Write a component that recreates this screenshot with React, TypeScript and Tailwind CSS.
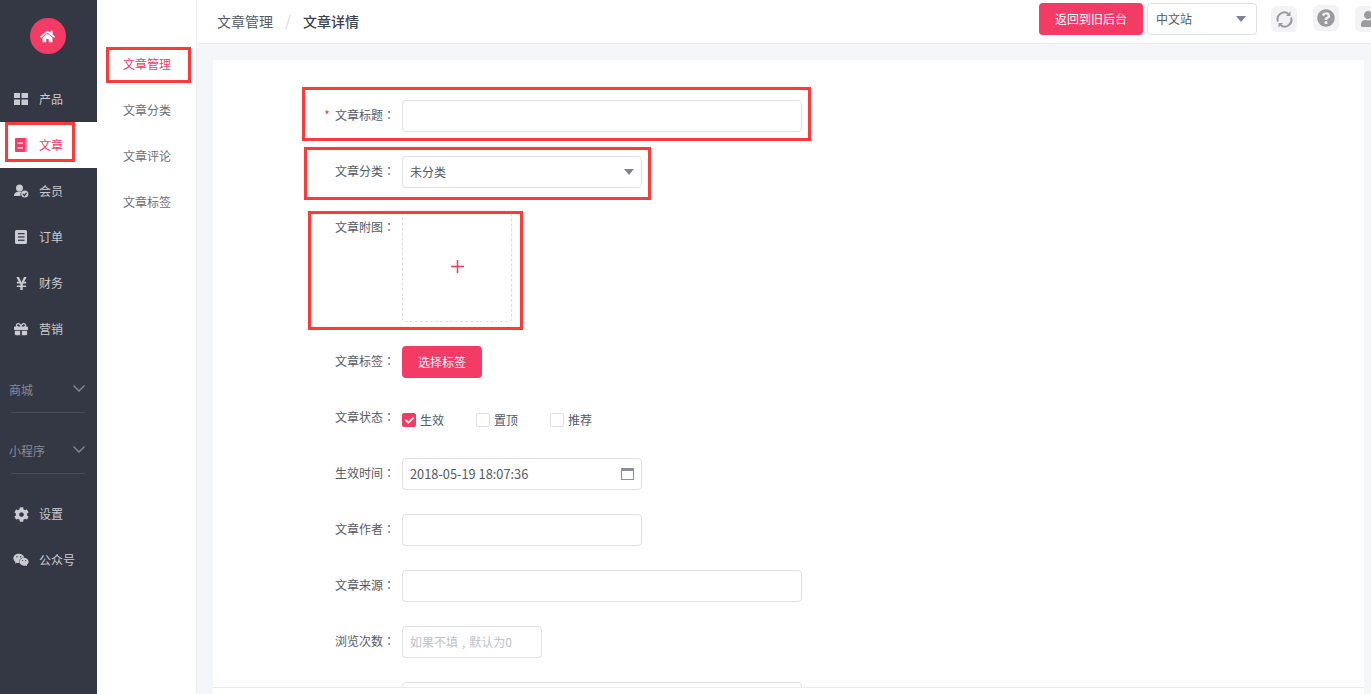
import { FaCheck, FaCog, FaGift, FaHome, FaQuestionCircle, FaUser, FaWeixin, FaYenSign } from "react-icons/fa";

const font = "font-['Microsoft_YaHei','Noto_Sans_CJK_SC',sans-serif]";

function GridIcon() {
  return (
    <svg width="14" height="12" viewBox="0 0 14 12" fill="currentColor">
      <rect x="0" y="0" width="6" height="5" />
      <rect x="7.5" y="0" width="6.5" height="5" />
      <rect x="0" y="6.5" width="6" height="5.5" />
      <rect x="7.5" y="6.5" width="6.5" height="5.5" />
    </svg>
  );
}

function DocIcon() {
  return (
    <svg width="12" height="14" viewBox="0 0 12 14" fill="currentColor">
      <path d="M1 0h10a1 1 0 0 1 1 1v12a1 1 0 0 1-1 1H1a1 1 0 0 1-1-1V1a1 1 0 0 1 1-1z" />
      <rect x="10" y="0" width="2" height="14" fill="#f98aa6" />
      <rect x="2.500" y="4.500" width="5.500" height="1.200" fill="#fff" />
      <rect x="2.500" y="9.300" width="5.500" height="1.200" fill="#fff" />
    </svg>
  );
}

function MemberIcon() {
  return (
    <svg width="15" height="14" viewBox="0 0 15 14" fill="currentColor">
      <circle cx="5.5" cy="4" r="3.5" />
      <path d="M0 12c0-3 2-4.5 5.5-4.5 1 0 1.600.1 2.200.3A4 4 0 0 0 6.500 12z" />
      <circle cx="10.800" cy="10" r="3.600" />
      <path d="M9 10l1.400 1.500 2.200-2.700" fill="none" stroke="#343844" strokeWidth="1.200" />
    </svg>
  );
}

function OrderIcon() {
  return (
    <svg width="12" height="14" viewBox="0 0 12 14" fill="currentColor">
      <path d="M1.500 0h9A1.500 1.500 0 0 1 12 1.500v11a1.500 1.500 0 0 1-1.500 1.500h-9A1.500 1.500 0 0 1 0 12.500v-11A1.500 1.500 0 0 1 1.500 0z" />
      <rect x="3" y="3" width="6.500" height="1.300" fill="#343844" />
      <rect x="3" y="6.300" width="6.500" height="1.300" fill="#343844" />
      <rect x="3" y="9.600" width="6.500" height="1.300" fill="#343844" />
    </svg>
  );
}

function CalendarIcon() {
  return (
    <svg width="13" height="12" viewBox="0 0 13 12" fill="none" stroke="#8b8ea3">
      <rect x="0.500" y="0.500" width="12" height="11" />
      <rect x="0.500" y="0.500" width="12" height="2" fill="#8b8ea3" />
    </svg>
  );
}

function RefreshIcon() {
  return (
    <svg width="17" height="17" viewBox="0 0 17 17" fill="none" stroke="currentColor" strokeWidth="2">
      <path d="M2 10.500A6.700 6.700 0 0 1 12.500 3" />
      <path d="M15 6.500A6.700 6.700 0 0 1 4.500 14" />
      <path d="M14.500 0.500v4.500h-4.500z" fill="currentColor" stroke="none" />
      <path d="M2.500 16.500v-4.500h4.500z" fill="currentColor" stroke="none" />
    </svg>
  );
}

function Chevron() {
  return (
    <svg width="12" height="7" viewBox="0 0 12 7" fill="none" stroke="currentColor" strokeWidth="1.300">
      <path d="M0.500 0.500L6 6l5.500-5.500" />
    </svg>
  );
}

function Caret() {
  return <span className="h-0 w-0 border-x-[5px] border-t-[6px] border-x-transparent border-t-[#7f8296]" />;
}

const topMenu = [
  { label: "产品", icon: <GridIcon /> },
  { label: "文章", icon: <DocIcon />, active: true },
  { label: "会员", icon: <MemberIcon /> },
  { label: "订单", icon: <OrderIcon /> },
  { label: "财务", icon: <FaYenSign size={15} /> },
  { label: "营销", icon: <FaGift size={14} /> },
];

const subMenu = ["文章管理", "文章分类", "文章评论", "文章标签"];

function MenuRow({ label, icon, active }: { label: string; icon: React.ReactNode; active?: boolean }) {
  return (
    <div className={`flex h-[46px] items-center ${active ? "bg-white text-[#f43b66]" : "text-[#c9cbd1]"}`}>
      <span className="flex w-[39px] shrink-0 justify-center pl-[3px]">{icon}</span>
      <span className="text-xs">{label}</span>
    </div>
  );
}

function Group({ label }: { label: string }) {
  return (
    <div className="ml-[11px] mr-[12px] flex h-[47px] items-center justify-between border-b border-[#494d5a] pt-[1px] text-xs text-[#868a96]">
      <span className="-ml-[2px]">{label}</span>
      <span className="-mt-[2px]">
        <Chevron />
      </span>
    </div>
  );
}

function Field({ label, required, children, className }: { label?: string; required?: boolean; children: React.ReactNode; className: string }) {
  return (
    <div className={`flex ${className}`}>
      <label className="flex h-8 w-[189px] shrink-0 items-center justify-end pb-[2px] pr-[7px] text-xs text-[#555a66]">
        {required && <span className="mr-[5px] text-[#e8452c]">*</span>}
        {label}
        {label && <span className="font-['Noto_Sans_CJK_TC',sans-serif]">：</span>}
      </label>
      {children}
    </div>
  );
}

function TextBox({ width, children }: { width: string; children?: React.ReactNode }) {
  return (
    <div className={`flex h-8 items-center justify-between rounded-[4px] border border-[#dfe0e4] bg-white px-[7px] text-xs text-[#555a66] ${width}`}>
      {children}
    </div>
  );
}

function Check({ label, on }: { label: string; on?: boolean }) {
  return (
    <div className="flex w-[74px] items-center gap-[4px] text-xs text-[#555a66]">
      <span className={`flex h-[14px] w-[14px] items-center justify-center rounded-[2px] border ${on ? "border-[#f43b66] bg-[#f43b66]" : "border-[#dfe0e4] bg-white"}`}>
        {on && <FaCheck size={9} className="text-white" />}
      </span>
      {label}
    </div>
  );
}

export default function App() {
  return (
    <div className={`relative flex h-[694px] w-[1371px] overflow-hidden bg-[#f5f6fa] ${font}`}>
      {/* Sidebar */}
      <aside className="flex w-[97px] shrink-0 flex-col bg-[#343844]">
        <div className="flex h-[76px] shrink-0 items-start justify-center pr-[2px] pt-[18px]">
          <span className="flex h-9 w-9 items-center justify-center rounded-full bg-[#f43b66] text-white">
            <FaHome size={15} />
          </span>
        </div>
        {topMenu.map((m) => (
          <MenuRow key={m.label} {...m} />
        ))}
        <div className="mt-[14px] flex flex-col gap-[14px]">
          <Group label="商城" />
          <Group label="小程序" />
        </div>
        <div className="mt-[17px]">
          <MenuRow label="设置" icon={<FaCog size={15} />} />
          <MenuRow label="公众号" icon={<FaWeixin size={16} />} />
        </div>
      </aside>

      {/* Sub menu */}
      <nav className="flex w-[100px] shrink-0 flex-col border-r border-[#eceef2] bg-white pt-[41px]">
        {subMenu.map((s, i) => (
          <div key={s} className={`flex h-[46px] items-center pl-[26px] text-xs ${i === 0 ? "text-[#f43b66]" : "text-[#6c6f78]"}`}>
            {s}
          </div>
        ))}
      </nav>

      <div className="flex min-w-0 flex-1 flex-col">
        {/* Header */}
        <header className="flex h-[44px] shrink-0 items-center border-b border-[#e9ebef] bg-white pl-5">
          <div className="flex items-center pb-[1px]">
            <span className="text-sm text-[#555a66]">文章管理</span>
            <span className="mx-3 text-[15px] text-[#d5d6da]">/</span>
            <span className="text-sm font-medium text-[#3d4250]">文章详情</span>
          </div>
          <div className="-mr-[10px] -mt-[5px] ml-auto flex items-center">
            <button className="h-8 w-[104px] rounded-[4px] bg-[#f43b66] text-xs text-white">返回到旧后台</button>
            <div className="ml-1 flex h-8 w-[110px] items-center justify-between rounded-[4px] border border-[#dfe0e4] pl-2 pr-[10px] text-xs text-[#555a66]">
              中文站
              <Caret />
            </div>
            <span className="ml-[14px] flex h-[26px] w-[26px] items-center justify-center rounded-[6px] bg-[#f3f3f5] text-[#9a9a9f]">
              <RefreshIcon />
            </span>
            <span className="-mt-[2px] ml-4 flex h-[26px] w-[26px] items-center justify-center rounded-[6px] bg-[#f3f3f5] text-[#9a9a9f]">
              <FaQuestionCircle size={18} />
            </span>
            <span className="ml-[16px] flex h-[26px] w-[26px] items-center justify-center rounded-[6px] bg-[#f3f3f5] text-[#9a9a9f]">
              <FaUser size={16} />
            </span>
          </div>
        </header>

        {/* Form */}
        <main className="ml-4 mr-[7px] mt-4 flex-1 overflow-hidden bg-white pt-10">
          <Field label="文章标题" required className="mb-6">
            <TextBox width="w-[400px]" />
          </Field>
          <Field label="文章分类" className="mb-6">
            <TextBox width="w-[240px]">
              未分类
              <Caret />
            </TextBox>
          </Field>
          <Field label="文章附图" className="mb-6">
            <div className="flex h-[110px] w-[110px] items-center justify-center rounded-[4px] border border-dashed border-[#dcdcdc]">
              <svg className="-mt-[1px]" width="13" height="13" viewBox="0 0 13 13" fill="#f43b58">
                <rect x="5.750" y="0" width="1.500" height="13" />
                <rect x="0" y="5.750" width="13" height="1.500" />
              </svg>
            </div>
          </Field>
          <Field label="文章标签" className="mb-6">
            <button className="h-8 w-20 rounded-[4px] bg-[#f43b66] text-xs text-white">选择标签</button>
          </Field>
          <Field label="文章状态" className="mb-6">
            <div className="flex h-8 items-center pt-[4px]">
              <Check label="生效" on />
              <Check label="置顶" />
              <Check label="推荐" />
            </div>
          </Field>
          <Field label="生效时间" className="mb-6">
            <TextBox width="w-[240px]">
              <span className="text-[12.8px]">2018-05-19 18:07:36</span>
              <CalendarIcon />
            </TextBox>
          </Field>
          <Field label="文章作者" className="mb-6">
            <TextBox width="w-[240px]" />
          </Field>
          <Field label="文章来源" className="mb-6">
            <TextBox width="w-[400px]" />
          </Field>
          <Field label="浏览次数" className="mb-6">
            <TextBox width="w-[140px]">
              <span className="text-[#c0c2c8]">
                如果不填<span className="mx-1">,</span>默认为0
              </span>
            </TextBox>
          </Field>
          <Field className="">
            <TextBox width="w-[400px]" />
          </Field>
        </main>
      </div>

      {/* Footer strip that covers the bottom of the form */}
      <div className="absolute bottom-0 left-[213px] right-[7px] h-[7px] border-t border-[#e9ebef] bg-white" />

      {/* Red annotation frames */}
      <div className="absolute left-[302px] top-[87px] h-[54px] w-[509px] border-[3px] border-[#fc3a3a]" />
      <div className="absolute left-[304px] top-[147px] h-[53px] w-[347px] border-[3px] border-[#fc3a3a]" />
      <div className="absolute left-[308px] top-[211px] h-[119px] w-[215px] border-[3px] border-[#fc3a3a]" />
      <div className="absolute left-[5px] top-[122px] h-[40px] w-[70px] border-[3px] border-[#fc3a3a]" />
      <div className="absolute left-[106px] top-[47px] h-[36px] w-[85px] border-[3px] border-[#fc3a3a]" />
    </div>
  );
}
